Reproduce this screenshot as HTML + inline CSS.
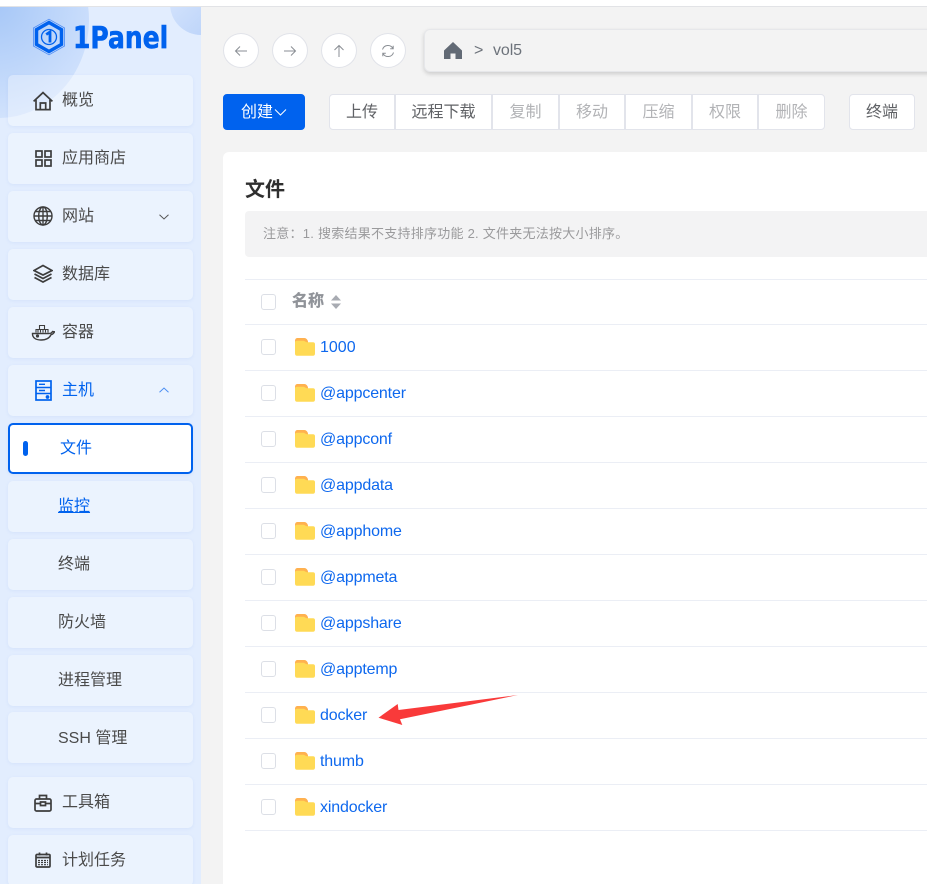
<!DOCTYPE html>
<html lang="zh"><head><meta charset="utf-8"><title>1Panel</title>
<style>
*{box-sizing:border-box;margin:0;padding:0}
html,body{width:927px;height:884px;overflow:hidden;background:#f3f3f3}
body{position:relative;font-family:"Liberation Sans","Noto Sans CJK SC",sans-serif;font-size:16px;color:#4a4a4a}
.a{position:absolute}
.top{left:0;top:0;width:927px;height:7px;background:#fff;border-bottom:1px solid #e2e3e6;z-index:5}
.side{left:0;top:7px;width:201px;height:877px;background:#e2edfe;overflow:hidden}
.b1{left:-92px;top:-85px;width:181px;height:196px;border-radius:50%;background:radial-gradient(circle at 48% 42%,#a6c7f7 0%,#bcd5fa 40%,#deeafe 100%)}
.b2{left:170px;top:-34px;width:62px;height:62px;border-radius:50%;background:linear-gradient(135deg,#dbe8fd,#b5cff9)}
.it{position:absolute;left:8px;width:185px;height:51px;border-radius:5px;background:rgba(255,255,255,.33);box-shadow:0 1px 3px rgba(120,160,230,.13);z-index:2}
.it span{position:absolute;top:1px;line-height:49px;white-space:nowrap}
.it svg{position:absolute}
.lab{left:54px}.sub{left:50px}
.act{background:#fff;border:2px solid #0062ee;color:#0062ee}
.ic{fill:none;stroke:#3d3d3d;stroke-width:1.7}
.cb{position:absolute;left:261px;width:15px;height:16px;background:#fff;border:1px solid #dcdfe6;border-radius:3px}
.circ{position:absolute;top:33px;width:36px;height:35px;border-radius:50%;background:#fff;border:1px solid #e1e3e9}
.circ svg{position:absolute;left:9px;top:9px;fill:none;stroke:#8a8e94;stroke-width:1}
.btn{position:absolute;top:94px;height:36px;background:#fff;border:1px solid #e2e4eb;text-align:center;line-height:35px;color:#606266;white-space:nowrap}
.dis{color:#b2b3b6}
.row{position:absolute;left:245px;width:682px;height:1px;background:#ebeef5}
.nm{position:absolute;left:320px;color:#0e68ee;line-height:20px;white-space:nowrap;letter-spacing:-.15px}
.fd{position:absolute;left:295px}
</style></head><body>
<div class="a top"></div>
<div class="a side"><div class="a b1"></div><div class="a b2"></div></div>

<!-- logo -->
<svg class="a" style="left:32px;top:18px;z-index:3" width="34" height="38" viewBox="0 0 34 38">
<path d="M17 1.200 32.600 10v18L17 36.800 1.400 28V10Z" fill="none" stroke="#4d8cf5" stroke-width=".8"/>
<path d="M17 4.500 29.500 11.600v14.800L17 33.500 4.500 26.400V11.600Z" fill="none" stroke="#0062ee" stroke-width="3.500"/>
<circle cx="17" cy="19" r="7.500" fill="none" stroke="#0062ee" stroke-width="1.300"/>
<path d="M14.200 16.500l3.800-2.500V24.500" fill="none" stroke="#0062ee" stroke-width="2.800"/>
</svg>
<div class="a" style="left:73px;top:22px;font:bold 25px/36px 'DejaVu Sans',sans-serif;color:#0062ee;-webkit-text-stroke:.5px #0062ee;z-index:3;transform:scaleY(1.2);transform-origin:0 26.5px;white-space:nowrap">1Panel</div>

<!-- sidebar -->
<div class="it" style="top:75px"><svg class="ic" style="left:25px;top:16px" width="20" height="20" viewBox="0 0 20 20"><path d="M.6 10.400 10 1.600l9.400 8.800M3 8.800V18.600h14V8.800M7.300 18.600V12h5.400v6.600"/></svg><span class="lab">概览</span></div>
<div class="it" style="top:133px"><svg class="ic" style="left:27px;top:17px" width="17" height="17" viewBox="0 0 17 17"><rect x="1" y="1" width="6" height="6"/><rect x="10" y="1" width="6" height="6"/><rect x="1" y="10" width="6" height="6"/><rect x="10" y="10" width="6" height="6"/></svg><span class="lab">应用商店</span></div>
<div class="it" style="top:191px"><svg class="ic" style="left:25px;top:15px;stroke-width:1.400" width="20" height="20" viewBox="0 0 20 20"><circle cx="10" cy="10" r="9"/><ellipse cx="10" cy="10" rx="4.300" ry="9"/><path d="M10 1v18M1 10h18M2.300 5.500h15.400M2.300 14.500h15.400"/></svg><span class="lab">网站</span><svg style="left:151px;top:23px" width="10" height="6" viewBox="0 0 10 6" fill="none" stroke="#555" stroke-width="1"><path d="M.5 .8 5 5l4.500-4.200"/></svg></div>
<div class="it" style="top:249px"><svg class="ic" style="left:25px;top:15px" width="20" height="20" viewBox="0 0 20 20"><path d="M10 1.500 19 6.500 10 11 1 6.500ZM1.500 10 10 14.500 18.500 10M1.500 13.500 10 18 18.500 13.500"/></svg><span class="lab">数据库</span></div>
<div class="it" style="top:307px"><svg style="left:23px;top:15px" width="24" height="20" viewBox="0 0 24 20" fill="none" stroke="#3d3d3d" stroke-width="1.400"><path d="M1.500 11.500h16.500c1.500 0 3-.8 3.500-2l2 .3c-1 2-2.500 2.700-3.500 2.900C18.500 16 15 18 10 18 4.500 18 1.300 15.500 1.500 11.500Z"/><path d="M5 10.500V7.500h12v3M8.500 7.500V3.500h5v4M7 7.500v3M9.500 7.500v3M12 7.500v3M14.500 7.500v3" stroke-width="1.100"/><circle cx="6.500" cy="14" r=".9" fill="#3d3d3d"/></svg><span class="lab">容器</span></div>
<div class="it" style="top:365px;color:#0062ee"><svg style="left:27px;top:15px" width="17" height="21" viewBox="0 0 17 21" fill="none" stroke="#0062ee" stroke-width="1.700"><rect x="1" y="1" width="15" height="19"/><path d="M1 7.500h15M1 13.500h15M4 4.300h6M4 10.500h6" stroke-width="1.400"/><circle cx="12.500" cy="17" r="1" fill="#0062ee"/></svg><span class="lab">主机</span><svg style="left:151px;top:22px" width="10" height="6" viewBox="0 0 10 6" fill="none" stroke="#4a8df2" stroke-width="1"><path d="M.5 5.200 5 1l4.500 4.200"/></svg></div>
<div class="it act" style="top:423px"><i class="a" style="left:13px;top:16px;width:5px;height:15px;border-radius:3px;background:#0062ee"></i><span style="left:50px;top:-1px">文件</span></div>
<div class="it" style="top:481px;color:#0062ee"><span class="sub" style="text-decoration:underline">监控</span></div>
<div class="it" style="top:539px"><span class="sub">终端</span></div>
<div class="it" style="top:597px"><span class="sub">防火墙</span></div>
<div class="it" style="top:655px"><span class="sub">进程管理</span></div>
<div class="it" style="top:712px"><span class="sub" style="top:2px">SSH 管理</span></div>
<div class="it" style="top:777px"><svg class="ic" style="left:26px;top:17px" width="18" height="18" viewBox="0 0 18 18"><rect x="1" y="5" width="16" height="12" rx="1.500"/><path d="M5.500 5V1.500h7V5M1 9.500h5.500M11.500 9.500H17M6.500 8h5v3.500h-5Z"/></svg><span class="lab">工具箱</span></div>
<div class="it" style="top:835px"><svg class="ic" style="left:27px;top:17px" width="16" height="16" viewBox="0 0 16 16"><rect x="1" y="2.500" width="14" height="12.500" rx="1"/><path d="M1 5.500h14M4.500 .5v3M11.500 .5v3"/><path d="M3 8.500h10M3 10.500h10M3 12.700h10" stroke-width="1.200" stroke-dasharray="2 1"/></svg><span class="lab">计划任务</span></div>

<!-- nav circles -->
<div class="circ" style="left:223px"><svg width="16" height="16" viewBox="0 0 16 16"><path d="M14 8H2.500M7 3.500 2.500 8 7 12.500"/></svg></div>
<div class="circ" style="left:272px"><svg width="16" height="16" viewBox="0 0 16 16"><path d="M2 8h11.500M9 3.500 13.500 8 9 12.500"/></svg></div>
<div class="circ" style="left:321px"><svg width="16" height="16" viewBox="0 0 16 16"><path d="M8 14V2.500M3.500 7 8 2.500 12.500 7"/></svg></div>
<div class="circ" style="left:370px"><svg width="16" height="16" viewBox="0 0 16 16"><path d="M2.500 6.500A5.700 5.700 0 0 1 13 5.500M13.500 9.500A5.700 5.700 0 0 1 3 10.500M13.200 2.800V5.800H10.200M2.800 13.200V10.200H5.800"/></svg></div>

<!-- breadcrumb -->
<div class="a" style="left:424px;top:29px;width:520px;height:43px;background:#f3f3f3;border:1px solid #e6e7ea;border-radius:6px;box-shadow:0 2px 4px rgba(0,0,0,.16)"></div>
<svg class="a" style="left:444px;top:42px" width="18" height="17" viewBox="0 0 18 17"><path d="M9 0 18 8.500V17H11.500V11.500H6.500V17H0V8.500Z" fill="#626a75"/></svg>
<div class="a" style="left:474px;top:41px;line-height:20px;color:#6d737b">&gt;</div>
<div class="a" style="left:493px;top:41px;line-height:20px;color:#6d737b;letter-spacing:-.1px">vol5</div>

<!-- toolbar -->
<div class="btn" style="left:223px;width:82px;background:#0062ee;border-color:#0062ee;color:#fff;border-radius:4px;text-align:left;padding-left:17px">创建<svg style="position:absolute;left:50px;top:13px" width="13" height="9" viewBox="0 0 13 9" fill="none" stroke="#fff" stroke-width="1"><path d="M1 1.500 6.500 7 12 1.500"/></svg></div>
<div class="btn" style="left:329px;width:66px;border-radius:4px 0 0 4px">上传</div>
<div class="btn" style="left:395px;width:97px">远程下载</div>
<div class="btn dis" style="left:492px;width:67px">复制</div>
<div class="btn dis" style="left:559px;width:66px">移动</div>
<div class="btn dis" style="left:625px;width:67px">压缩</div>
<div class="btn dis" style="left:692px;width:66px">权限</div>
<div class="btn dis" style="left:758px;width:67px;border-radius:0 4px 4px 0">删除</div>
<div class="btn" style="left:849px;width:66px;border-radius:4px">终端</div>

<!-- card -->
<div class="a" style="left:223px;top:152px;width:720px;height:740px;background:#fff;border-radius:6px"></div>
<div class="a" style="left:245px;top:176px;font-size:20px;font-weight:bold;line-height:28px;color:#2f2f2f">文件</div>
<div class="a" style="left:245px;top:211px;width:700px;height:46px;background:#f3f3f4;border-radius:4px"></div>
<div class="a" style="left:263px;top:225px;font-size:13px;line-height:17px;color:#9a9a9c;letter-spacing:.25px;white-space:nowrap">注意：1. 搜索结果不支持排序功能 2. 文件夹无法按大小排序。</div>

<div class="row" style="top:279px"></div>
<div class="cb" style="top:294px"></div>
<div class="a" style="left:292px;top:291px;font-weight:bold;line-height:22px;color:#909399;-webkit-text-stroke:.3px #909399;font-size:16px">名称</div>
<svg class="a" style="left:331px;top:295px" width="10" height="14" viewBox="0 0 10 14"><path d="M5 0 10 5.500H0ZM5 14 0 8.500H10Z" fill="#a8abb2"/></svg>

<div class="row" style="top:324px"></div>
<div class="row" style="top:370px"></div>
<div class="row" style="top:416px"></div>
<div class="row" style="top:462px"></div>
<div class="row" style="top:508px"></div>
<div class="row" style="top:554px"></div>
<div class="row" style="top:600px"></div>
<div class="row" style="top:646px"></div>
<div class="row" style="top:692px"></div>
<div class="row" style="top:738px"></div>
<div class="row" style="top:784px"></div>
<div class="row" style="top:830px"></div>

<svg width="0" height="0" style="position:absolute"><defs><g id="f"><path d="M0 3C0 1 1 0 2.500 0H9.500C11 0 12.500 1.500 13 3.500V6H0Z" fill="#ffb14f"/><path d="M0 4.500C0 3.200 1 2.800 2 2.800H8C10 2.800 10.500 4.200 12 4.200H18C19.300 4.200 20 5 20 6.200V15.500C20 17 19.200 17.800 18 17.800H2C.8 17.800 0 17 0 15.500Z" fill="#ffda55"/></g></defs></svg>

<div class="cb" style="top:339px"></div><svg class="fd" style="top:338px" width="20" height="18"><use href="#f"/></svg><div class="nm" style="top:338px;letter-spacing:0">1000</div>
<div class="cb" style="top:385px"></div><svg class="fd" style="top:384px" width="20" height="18"><use href="#f"/></svg><div class="nm" style="top:384px">@appcenter</div>
<div class="cb" style="top:431px"></div><svg class="fd" style="top:430px" width="20" height="18"><use href="#f"/></svg><div class="nm" style="top:430px">@appconf</div>
<div class="cb" style="top:477px"></div><svg class="fd" style="top:476px" width="20" height="18"><use href="#f"/></svg><div class="nm" style="top:476px">@appdata</div>
<div class="cb" style="top:523px"></div><svg class="fd" style="top:522px" width="20" height="18"><use href="#f"/></svg><div class="nm" style="top:522px">@apphome</div>
<div class="cb" style="top:569px"></div><svg class="fd" style="top:568px" width="20" height="18"><use href="#f"/></svg><div class="nm" style="top:568px">@appmeta</div>
<div class="cb" style="top:615px"></div><svg class="fd" style="top:614px" width="20" height="18"><use href="#f"/></svg><div class="nm" style="top:614px">@appshare</div>
<div class="cb" style="top:661px"></div><svg class="fd" style="top:660px" width="20" height="18"><use href="#f"/></svg><div class="nm" style="top:660px">@apptemp</div>
<div class="cb" style="top:707px"></div><svg class="fd" style="top:706px" width="20" height="18"><use href="#f"/></svg><div class="nm" style="top:706px">docker</div>
<div class="cb" style="top:753px"></div><svg class="fd" style="top:752px" width="20" height="18"><use href="#f"/></svg><div class="nm" style="top:752px">thumb</div>
<div class="cb" style="top:799px"></div><svg class="fd" style="top:798px" width="20" height="18"><use href="#f"/></svg><div class="nm" style="top:798px">xindocker</div>

<!-- arrow -->
<svg class="a" style="left:0;top:0;z-index:6" width="927" height="884"><polygon points="378.500,717.700 397.700,704 398.500,710 518,695 400,719.300 402.300,725" fill="#f93a3a"/></svg>
</body></html>
